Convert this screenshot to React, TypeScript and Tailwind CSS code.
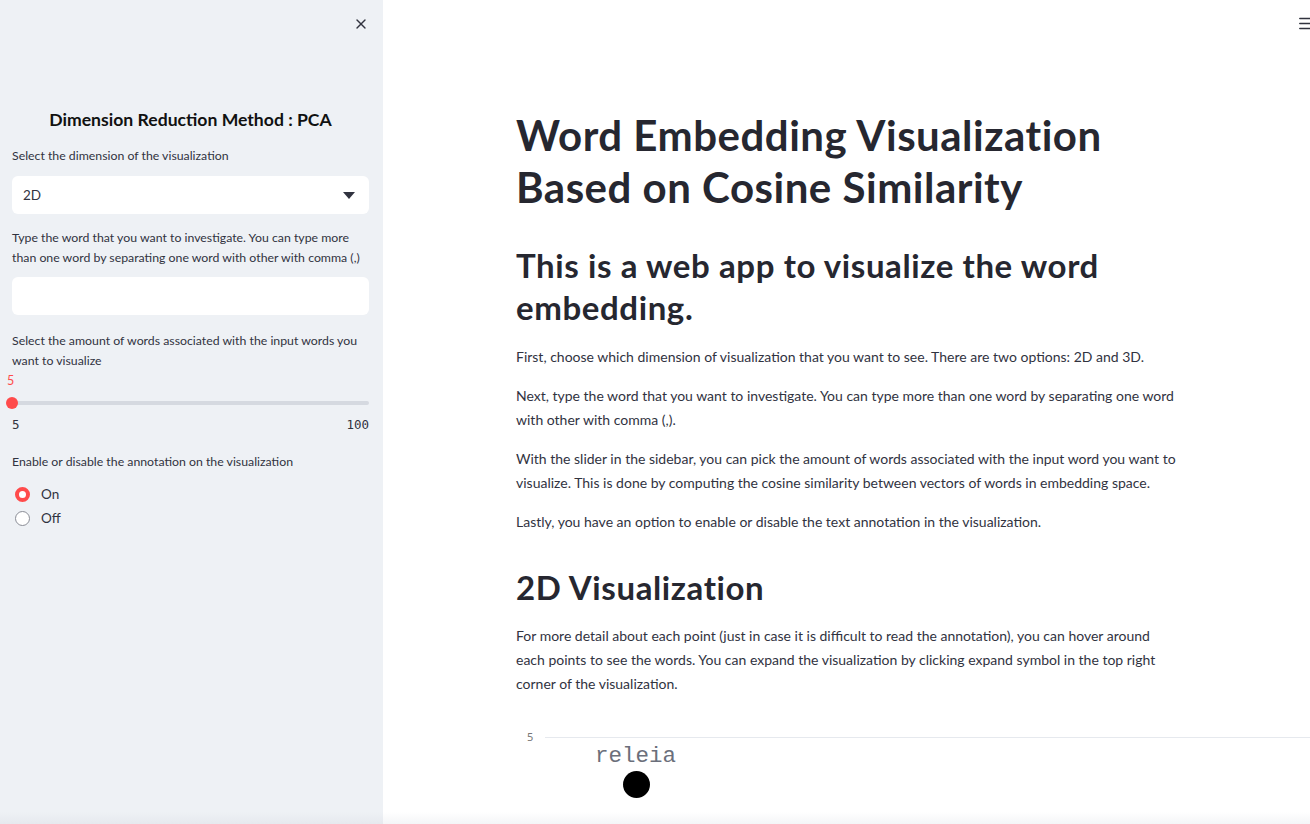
import { X, Menu } from "lucide-react";

const font = { fontFamily: "Lato, 'Noto Sans', sans-serif" };

function Sidebar() {
  return (
    <aside className="relative h-full w-[383px] shrink-0 bg-[#eef1f5] text-[#31333f]">
      <button className="absolute right-[14px] top-[16px] text-[#31333f]">
        <X size={16} strokeWidth={2} />
      </button>
      <div className="pl-3 pr-[14px] pt-[106px]">
        <h2 className="text-center text-[17.6px] font-bold leading-[28px] text-[#111]">
          Dimension Reduction Method : PCA
        </h2>
        <p className="mt-[13px] text-[12.3px] leading-[18px]">Select the dimension of the visualization</p>
        <div className="mt-[11px] flex h-[38px] items-center justify-between rounded-md bg-white pl-[11px] pr-[14px] text-[13.5px]">
          <span>2D</span>
          <svg width="12" height="7" viewBox="0 0 12 7">
            <path d="M0 0h12L6 7z" fill="#31333f" />
          </svg>
        </div>
        <p className="mt-[14px] text-[12.3px] leading-[20px]">
          Type the word that you want to investigate. You can type more than one word by separating one word with other
          with comma (,)
        </p>
        <div className="mt-[9px] h-[38px] rounded-md bg-white" />
        <p className="mt-[16px] text-[12.3px] leading-[20px]">
          Select the amount of words associated with the input words you want to visualize
        </p>
        <div className="mt-[1px] text-[12.5px] leading-[18px] text-[#ff4b4b]" style={{ marginLeft: -5 }}>
          5
        </div>
        <div className="relative mt-[11px] h-[4px] rounded-full bg-[#d5d9e0]">
          <div className="absolute left-[-6px] top-[-4px] h-[12px] w-[12px] rounded-full bg-[#ff4b4b]" />
        </div>
        <div
          className="mt-[11px] flex justify-between text-[12.5px] leading-[18px] text-[#31333f]"
          style={{ fontFamily: "'DejaVu Sans Mono', monospace" }}
        >
          <span>5</span>
          <span>100</span>
        </div>
        <p className="mt-[19px] text-[12.3px] leading-[18px]">Enable or disable the annotation on the visualization</p>
        <div className="mt-[14px] flex flex-col gap-[6px] pl-[3px] text-[13.5px]">
          <label className="flex h-[18px] items-center gap-[11px]">
            <span className="h-[15px] w-[15px] rounded-full border-[4px] border-[#ff4b4b] bg-white" />
            On
          </label>
          <label className="flex h-[18px] items-center gap-[11px]">
            <span className="h-[15px] w-[15px] rounded-full border-[1.5px] border-[#8a8d96] bg-white" />
            Off
          </label>
        </div>
      </div>
      <div className="absolute bottom-0 left-0 right-0 h-[12px] bg-gradient-to-b from-[#eef1f5] to-[#e6e9ee]" />
    </aside>
  );
}

function Chart() {
  return (
    <div className="relative mt-[33px] h-[120px] w-[794px]" style={{ fontFamily: "'Liberation Mono', monospace" }}>
      <div className="flex items-center">
        <span className="w-[29px] pl-[11px] text-[11px] text-[#777]" style={{ fontFamily: "'Noto Sans', sans-serif" }}>
          5
        </span>
        <div className="h-px flex-1 bg-[#e6e9ee]" />
      </div>
      <div className="absolute left-[79px] top-[11px] text-[22.5px] text-[#6b6f7b]">releia</div>
      <div className="absolute left-[107px] top-[42px] h-[27px] w-[27px] rounded-full bg-black" />
    </div>
  );
}

export default function App() {
  return (
    <div className="flex h-[824px] w-[1310px] overflow-hidden bg-white" style={font}>
      <Sidebar />
      <main className="relative h-full flex-1 overflow-hidden text-[#31333f]">
        <button className="absolute right-[-4px] top-[15px] text-[#31333f]">
          <Menu size={17} strokeWidth={2.2} />
        </button>
        <div className="ml-[133px] w-[672px] pt-[109px]">
          <h1 className="max-w-[620px] text-[42px] font-bold leading-[52px] tracking-[0.5px] text-[#262730]">
            Word Embedding Visualization Based on Cosine Similarity
          </h1>
          <h2 className="mt-[31px] text-[33px] font-bold leading-[42px] tracking-[0.6px] text-[#262730]">
            This is a web app to visualize the word embedding.
          </h2>
          <div className="mt-[17px] space-y-[15px] text-[14px] leading-[24px]">
            <p>First, choose which dimension of visualization that you want to see. There are two options: 2D and 3D.</p>
            <p>
              Next, type the word that you want to investigate. You can type more than one word by separating one word
              with other with comma (,).
            </p>
            <p>
              With the slider in the sidebar, you can pick the amount of words associated with the input word you want to
              visualize. This is done by computing the cosine similarity between vectors of words in embedding space.
            </p>
            <p>Lastly, you have an option to enable or disable the text annotation in the visualization.</p>
          </div>
          <h2 className="mt-[32px] text-[33px] font-bold leading-[42px] tracking-[0.6px] text-[#262730]">
            2D Visualization
          </h2>
          <p className="mt-[16px] max-w-[652px] text-[14px] leading-[24px]">
            For more detail about each point (just in case it is difficult to read the annotation), you can hover around
            each points to see the words. You can expand the visualization by clicking expand symbol in the top right
            corner of the visualization.
          </p>
          <Chart />
        </div>
        <div className="absolute bottom-0 left-0 right-0 h-[12px] bg-gradient-to-b from-white to-[#f4f5f7]" />
      </main>
    </div>
  );
}
